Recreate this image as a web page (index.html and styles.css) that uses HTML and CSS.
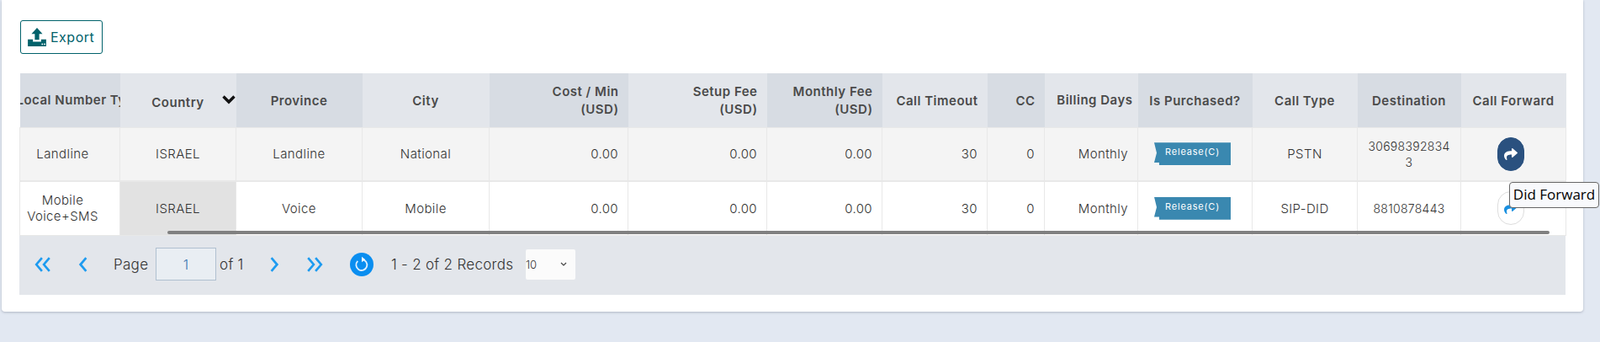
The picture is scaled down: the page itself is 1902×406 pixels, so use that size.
FILE: index.html

```html
<!DOCTYPE html>
<html lang="en">
  <head>
    <meta charset="utf-8">
    <title>Did Numbers</title>
    <link rel="stylesheet" href="styles.css">
  </head>
  <body>
    <svg class="defs" width="0" height="0">
      <symbol id="share" viewBox="0 0 512 512">
        <path d="M503.7 189.8L327.7 37.9C312.3 24.5 288 35.3 288 56v80.1C127.4 137.9 0 170.1 0 322.3c0 61.4 39.6 122.3 83.3 154.2 13.7 9.9 33.1-2.5 28.1-18.7C66.1 312.8 132.9 274.3 288 272.1V360c0 20.7 24.3 31.5 39.7 18.2l176-152c11.1-9.6 11.1-26.8 0-36.4z"/>
      </symbol>
    </svg>

    <div class="card">
      <button class="export">
        <svg class="export-icon" viewBox="0 0 22 22">
          <path d="M11 1l6 6.500h-3.600V14H8.600V7.500H5z"/>
          <path d="M1 13.500h5.500V16h9v-2.500H21V21H1z"/>
          <rect x="16" y="18" width="1.500" height="1.500" fill="#fff"/>
          <rect x="18.500" y="18" width="1.500" height="1.500" fill="#fff"/>
        </svg>
        Export
      </button>

      <div class="grid-wrap">
        <table class="grid">
          <colgroup>
            <col class="c1"><col class="c2"><col class="c3"><col class="c4"><col class="c5"><col class="c6"><col class="c7">
            <col class="c8"><col class="c9"><col class="c10"><col class="c11"><col class="c12"><col class="c13"><col class="c14">
          </colgroup>
          <thead>
            <tr>
              <th class="dark first-col"><div class="clip">Local Number Type</div></th>
              <th class="sorted"><span>Country</span>
                <svg class="sort" viewBox="0 0 16 11"><path d="M1.500 1.500L8 8l6.500-6.500" /></svg>
              </th>
              <th class="dark">Province</th>
              <th>City</th>
              <th class="dark num">Cost / Min<br>(USD)</th>
              <th class="num">Setup Fee<br>(USD)</th>
              <th class="dark num">Monthly Fee<br>(USD)</th>
              <th class="num">Call Timeout</th>
              <th class="dark num">CC</th>
              <th class="num billing">Billing Days</th>
              <th class="dark">Is Purchased?</th>
              <th>Call Type</th>
              <th class="dark">Destination</th>
              <th>Call Forward</th>
            </tr>
          </thead>
          <tbody>
            <tr class="odd">
              <td class="first-col">Landline</td>
              <td>ISRAEL</td>
              <td>Landline</td>
              <td>National</td>
              <td class="num">0.00</td>
              <td class="num">0.00</td>
              <td class="num">0.00</td>
              <td class="num">30</td>
              <td class="num">0</td>
              <td class="num">Monthly</td>
              <td><span class="release">Release(C)</span></td>
              <td>PSTN</td>
              <td class="digits">30698392834<br>3</td>
              <td><button class="forward active"><svg class="fwd-icon"><use href="#share"/></svg></button></td>
            </tr>
            <tr>
              <td class="first-col">Mobile<br>Voice+SMS</td>
              <td class="hover">ISRAEL</td>
              <td>Voice</td>
              <td>Mobile</td>
              <td class="num">0.00</td>
              <td class="num">0.00</td>
              <td class="num">0.00</td>
              <td class="num">30</td>
              <td class="num">0</td>
              <td class="num">Monthly</td>
              <td><span class="release">Release(C)</span></td>
              <td>SIP-DID</td>
              <td class="digits">8810878443</td>
              <td><button class="forward"><svg class="fwd-icon"><use href="#share"/></svg></button></td>
            </tr>
          </tbody>
        </table>
        <div class="scrollbar"></div>
        <div class="tooltip">Did Forward</div>
      </div>

      <div class="pager">
        <svg class="nav first" viewBox="0 0 18 16"><path d="M8 1L2 8l6 7M16 1l-6 7 6 7"/></svg>
        <svg class="nav prev" viewBox="0 0 12 16"><path d="M9 1L3 8l6 7"/></svg>
        <span class="page-label">Page</span>
        <input class="page-input" value="1">
        <span class="page-of">of 1</span>
        <svg class="nav next" viewBox="0 0 12 16"><path d="M3 1l6 7-6 7"/></svg>
        <svg class="nav last" viewBox="0 0 18 16"><path d="M2 1l6 7-6 7M10 1l6 7-6 7"/></svg>
        <span class="refresh">
          <svg viewBox="0 0 28 28"><path d="M14.500 8a6.500 6.500 0 1 1-5.200 1.800"/><path class="tip" d="M14 4.800l4 3.200-4 3.200z"/></svg>
        </span>
        <span class="records">1 - 2 of 2 Records</span>
        <span class="size">10<svg viewBox="0 0 10 6"><path d="M2 1l3 3 3-3"/></svg></span>
      </div>
    </div>
  </body>
</html>
```

FILE: styles.css

```css
* {
  box-sizing: border-box;
}

html, body {
  margin: 0;
  height: 406px;
  overflow: hidden;
}

body {
  background: #e2e8f2;
  font-family: Inter, "Open Sans", sans-serif;
  font-size: 15px;
  font-weight: 300;
  letter-spacing: 0.4px;
  color: #333;
}

.defs {
  display: block;
  height: 0;
}

.card {
  margin-left: 2px;
  width: 1880px;
  height: 370px;
  padding: 24px 21px 0;
  background: #fff;
  border-radius: 0 0 4px 4px;
  box-shadow: 0 1px 3px rgba(100, 110, 130, 0.4);
}

.export {
  display: flex;
  align-items: center;
  gap: 4px;
  width: 98px;
  height: 40px;
  margin-left: 1px;
  padding: 0 0 0 7px;
  background: #fff;
  border: 1px solid #00626b;
  border-radius: 3px;
  color: #00626b;
  font-family: inherit;
  font-size: 16px;
  font-weight: 400;
  letter-spacing: 0.5px;
}

.export-icon {
  width: 24px;
  height: 24px;
  fill: #00626b;
}

.grid-wrap {
  position: relative;
  margin-top: 23px;
}

.grid {
  width: 1838px;
  table-layout: fixed;
  border-collapse: collapse;
}

.c1 { width: 119px; }
.c2 { width: 138px; }
.c3 { width: 150px; }
.c4 { width: 151px; }
.c5 { width: 165px; }
.c6 { width: 165px; }
.c7 { width: 137px; }
.c8 { width: 125px; }
.c9 { width: 68px; }
.c10 { width: 111px; }
.c11 { width: 136px; }
.c12 { width: 125px; }
.c13 { width: 123px; }
.c14 { width: 125px; }

.grid th {
  height: 64px;
  padding: 1px 4px 0;
  background: #e3e6eb;
  color: #4a4a4a;
  font-weight: 600;
  font-size: 15px;
  letter-spacing: 0.5px;
  line-height: 21px;
  white-space: nowrap;
  text-align: center;
}

.grid th.dark {
  background: #d7dce3;
}

.grid th.first-col {
  padding: 0;
  text-align: left;
}

.clip {
  overflow: hidden;
  text-indent: -4px;
}

.grid th.sorted {
  position: relative;
  padding-top: 5px;
}

.sort {
  position: absolute;
  right: 1px;
  top: 26px;
  width: 16px;
  height: 11px;
  fill: none;
  stroke: #111;
  stroke-width: 3.4;
}

.grid td {
  height: 64px;
  padding: 0 8px;
  border: 1px solid #e8e8e8;
  border-bottom-width: 2px;
  text-align: center;
  line-height: 19px;
}

.grid td.first-col {
  padding: 0 17px 0 0;
}

.grid tbody tr:last-child td {
  height: 64px;
  border-bottom-width: 1px;
}

.grid td.digits {
  font-size: 14px;
  letter-spacing: 0.3px;
}

.odd td {
  background: #f4f4f4;
}

.grid td.hover {
  background: #e2e2e2;
}

.grid .num {
  text-align: right;
  padding-right: 11px;
}

.grid th.billing {
  padding: 0 6px 0 6px;
}

.release {
  display: block;
  width: 91px;
  height: 27px;
  margin: 0 0 0 11px;
  padding-top: 3px;
  background: #3a88b0;
  color: #fff;
  font-size: 11px;
  font-weight: 400;
  letter-spacing: 0.8px;
  line-height: 16px;
  clip-path: polygon(0 0, 100% 0, 100% 100%, 6px 100%, 6px 88%, 0 88%, 3px 45%);
}

.forward {
  display: block;
  width: 32px;
  height: 40px;
  margin: 0 0 0 35px;
  padding: 0;
  background: #fff;
  border: 1px solid #ddd;
  border-radius: 16px;
  fill: #1a90e0;
}

.forward.active {
  background: #2a517f;
  border-color: #2a517f;
  fill: #fff;
}

.fwd-icon {
  display: block;
  width: 16px;
  height: 16px;
  margin: 0 auto;
}

.scrollbar {
  position: absolute;
  left: 176px;
  right: 19px;
  bottom: 2px;
  height: 4px;
  background: #808080;
  border-radius: 2px;
}

.tooltip {
  position: absolute;
  left: 1771px;
  top: 129px;
  width: 107px;
  height: 31px;
  background: #f8f9fc;
  border: 1px solid #666;
  border-radius: 4px;
  color: #000;
  font-family: "Open Sans", sans-serif;
  font-size: 17px;
  font-weight: 400;
  letter-spacing: 0;
  line-height: 28px;
  text-align: center;
}

.pager {
  display: flex;
  align-items: center;
  height: 70px;
  padding-bottom: 2px;
  background: #e3e6eb;
  font-size: 17px;
  letter-spacing: 0.3px;
  color: #333;
}

.nav {
  flex: none;
  height: 18px;
  fill: none;
  stroke: #1e9bf0;
  stroke-width: 2.4;
}

.first {
  width: 20px;
  margin-left: 18px;
}

.prev {
  width: 14px;
  margin-left: 31px;
}

.page-label {
  width: 50px;
  margin-left: 29px;
}

.page-input {
  flex: none;
  width: 72px;
  height: 39px;
  background: #e9eef3;
  border: 1px solid #b0c0d0;
  color: #3a78b0;
  font-family: inherit;
  font-size: 16px;
  font-weight: 300;
  text-align: center;
}

.page-of {
  width: 62px;
  padding-left: 4px;
}

.next {
  width: 14px;
}

.last {
  width: 20px;
  margin-left: 31px;
}

.refresh {
  flex: none;
  width: 28px;
  height: 28px;
  margin-left: 32px;
  background: #0a8ef0;
  border-radius: 50%;
}

.refresh svg {
  display: block;
  fill: none;
  stroke: #dff0ff;
  stroke-width: 1.8;
}

.refresh .tip {
  fill: #fff;
  stroke: none;
}

.records {
  width: 160px;
  margin-left: 21px;
}

.size {
  display: flex;
  align-items: center;
  justify-content: space-between;
  width: 59px;
  height: 36px;
  padding-right: 9px;
  background: #fbfbfb;
  border-radius: 2px;
  font-size: 13px;
  letter-spacing: 0;
}

.size svg {
  width: 10px;
  height: 6px;
  fill: none;
  stroke: #444;
  stroke-width: 1.2;
}
```
